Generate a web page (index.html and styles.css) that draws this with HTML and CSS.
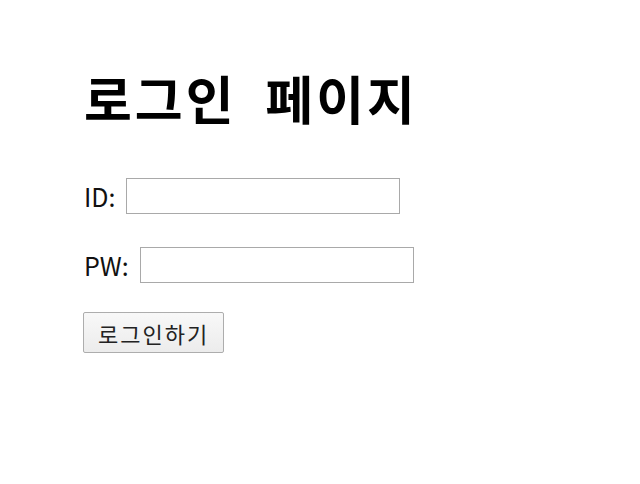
FILE: index.html
```html
<!DOCTYPE html>
<html>
<head>
    <meta charset="utf-8">
    <title>로그인 페이지</title>
    <link rel="stylesheet" href="styles.css">
</head>
<body>
    <div class="login-container">
        <h1>로그인 페이지</h1>
        <form class="login-form">
            <div class="form-row">
                <label for="userId">ID:</label>
                <input type="text" id="userId">
            </div>
            <div class="form-row">
                <label for="userPw">PW:</label>
                <input type="password" id="userPw">
            </div>
            <button type="button" class="button">로그인하기</button>
        </form>
    </div>
</body>
</html>
```

FILE: styles.css
```css
body {
    margin: 0;
    background: #fff;
    color: #000;
    font-family: "Noto Sans CJK KR", "Noto Sans", sans-serif;
}
.login-container {
    padding: 58px 84px;
}
h1 {
    margin: 0 0 40px 0;
    font-size: 52px;
    font-weight: bold;
    line-height: 80px;
    letter-spacing: 3px;
    word-spacing: 14px;
}
.form-row {
    display: flex;
    align-items: center;
    gap: 11px;
    margin-bottom: 33px;
    font-size: 25px;
    color: #111;
}
.form-row:last-of-type {
    margin-bottom: 29px;
}
.form-row input {
    width: 274px;
    height: 36px;
    padding: 0;
    border: 1px solid #a9a9a9;
    box-sizing: border-box;
}
.button {
    margin-left: -1px;
    height: 41px;
    padding: 0 14px;
    font-family: inherit;
    font-size: 22px;
    letter-spacing: 2px;
    color: #222;
    background: linear-gradient(#f8f8f8, #ececec);
    border: 1px solid #adadad;
    border-radius: 2px;
}
```
